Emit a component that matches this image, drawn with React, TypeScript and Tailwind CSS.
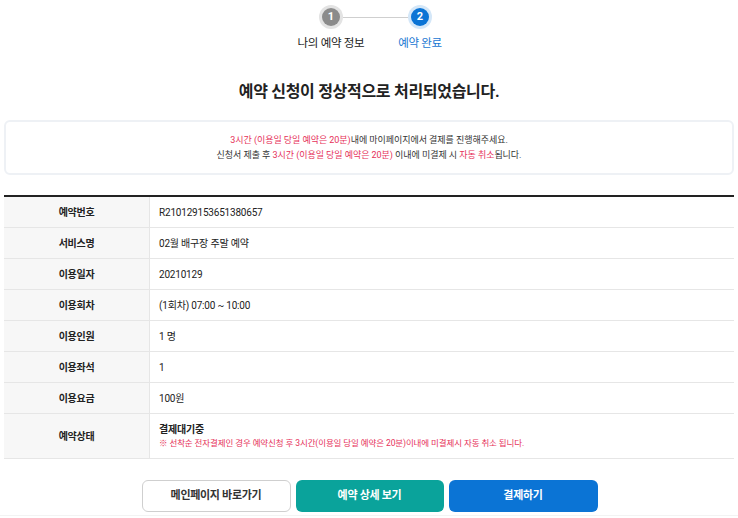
import React from "react";

const rows = [
  { label: "예약번호", value: "R210129153651380657" },
  { label: "서비스명", value: "02월 배구장 주말 예약" },
  { label: "이용일자", value: "20210129" },
  { label: "이용회차", value: "(1회차) 07:00 ~ 10:00" },
  { label: "이용인원", value: "1 명" },
  { label: "이용좌석", value: "1" },
  { label: "이용요금", value: "100원" },
];

const font = { fontFamily: "Roboto, 'Noto Sans CJK KR', sans-serif" };

export default function App() {
  return (
    <div className="w-[738px] h-[518px] bg-white text-[#222] overflow-hidden" style={font}>
      {/* stepper */}
      <div className="flex flex-col items-center pl-[13px] pt-[5px]">
        <div className="flex items-center">
          <div className="w-6 h-6 rounded-full bg-[#e3e3e3] flex items-center justify-center">
            <div className="w-[18px] h-[18px] rounded-full bg-[#8b8b8b] text-white text-[11px] font-bold flex items-center justify-center">1</div>
          </div>
          <div className="w-[65px] h-px bg-[#cfcfcf]" />
          <div className="w-6 h-6 rounded-full bg-[#d4e7f8] flex items-center justify-center">
            <div className="w-[18px] h-[18px] rounded-full bg-[#0b74d5] text-white text-[11px] font-bold flex items-center justify-center">2</div>
          </div>
        </div>
        <div className="flex mt-[6px] text-[11.5px] tracking-[-0.3px]">
          <div className="w-[89px] text-center text-[#222]">나의 예약 정보</div>
          <div className="w-[89px] text-center text-[#1877d2]">예약 완료</div>
        </div>
      </div>

      <h1 className="mt-[28px] text-center text-[16px] leading-[24px] font-bold tracking-[-0.3px] text-[#222]">
        예약 신청이 정상적으로 처리되었습니다.
      </h1>

      <div className="mx-[4px] mt-[16px] h-[55px] rounded-md border-2 border-[#eef1f5] flex flex-col items-center justify-center text-[9px] leading-[15px] tracking-[-0.05px] text-[#333]">
        <p>
          <span className="text-[#e6325a]">3시간 (이용일 당일 예약은 20분)</span>내에 마이페이지에서 결제를 진행해주세요.
        </p>
        <p>
          신청서 제출 후 <span className="text-[#e6325a]">3시간 (이용일 당일 예약은 20분)</span> 이내에 미결제 시{" "}
          <span className="text-[#e6325a]">자동 취소</span>됩니다.
        </p>
      </div>

      <div className="mx-[4px] mt-[20px] border-t-2 border-[#222]">
        {rows.map((r) => (
          <div key={r.label} className="flex h-[31px] border-b border-[#e6e6e6]">
            <div className="w-[146px] bg-[#f7f7f7] border-r border-[#e6e6e6] flex items-center justify-center text-[10px] font-bold tracking-[-0.3px]">
              {r.label}
            </div>
            <div className="flex-1 flex items-center pl-[9px] text-[10px] tracking-[-0.2px]">{r.value}</div>
          </div>
        ))}
        <div className="flex h-[45px] border-b border-[#e6e6e6]">
          <div className="w-[146px] bg-[#f7f7f7] border-r border-[#e6e6e6] flex items-center justify-center text-[10px] font-bold tracking-[-0.3px]">
            예약상태
          </div>
          <div className="flex-1 flex flex-col justify-center pl-[9px]">
            <div className="text-[10px] font-bold tracking-[-0.2px] leading-[14px]">결제대기중</div>
            <div className="text-[8.5px] text-[#e6325a] tracking-[-0.1px] leading-[13px]">
              ※ 선착순 전자결제인 경우 예약신청 후 3시간(이용일 당일 예약은 20분)이내에 미결제시 자동 취소 됩니다.
            </div>
          </div>
        </div>
      </div>

      <div className="mt-[21px] flex justify-center gap-[5px] pl-[1px]">
        <button className="w-[149px] h-[32px] rounded-md border border-[#cfcfcf] bg-white text-[11px] font-bold text-[#333] tracking-[-0.3px]">
          메인페이지 바로가기
        </button>
        <button className="w-[148px] h-[32px] rounded-md bg-[#0aa39b] text-[11px] font-bold text-white tracking-[-0.3px]">
          예약 상세 보기
        </button>
        <button className="w-[149px] h-[32px] rounded-md bg-[#0b74d5] text-[11px] font-bold text-white tracking-[-0.3px]">
          결제하기
        </button>
      </div>
      <div className="mt-[3px] h-px bg-[#f3f3f3]" />
    </div>
  );
}
